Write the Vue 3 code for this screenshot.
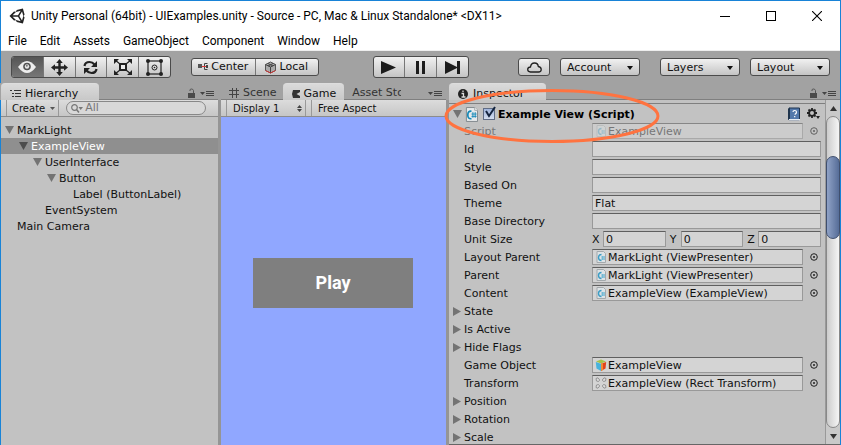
<script setup>
import { ref } from 'vue'

const menus = ['File', 'Edit', 'Assets', 'GameObject', 'Component', 'Window', 'Help']
const dropdowns = ['Account', 'Layers', 'Layout']
const tool = ref('view')
const tools = ['view', 'move', 'rotate', 'scale', 'rect']
const enabled = ref(true)

const tree = [
  { name: 'MarkLight', depth: 0, open: true },
  { name: 'ExampleView', depth: 1, open: true, selected: true },
  { name: 'UserInterface', depth: 2, open: true },
  { name: 'Button', depth: 3, open: true },
  { name: 'Label (ButtonLabel)', depth: 4 },
  { name: 'EventSystem', depth: 2 },
  { name: 'Main Camera', depth: 0 }
]

const rows = ref([
  { label: 'Script', kind: 'object', icon: 'cs', value: 'ExampleView', disabled: true },
  { label: 'Id', kind: 'text', value: '' },
  { label: 'Style', kind: 'text', value: '' },
  { label: 'Based On', kind: 'text', value: '' },
  { label: 'Theme', kind: 'text', value: 'Flat' },
  { label: 'Base Directory', kind: 'text', value: '' },
  { label: 'Unit Size', kind: 'vector', value: { X: '0', Y: '0', Z: '0' } },
  { label: 'Layout Parent', kind: 'object', icon: 'cs', value: 'MarkLight (ViewPresenter)' },
  { label: 'Parent', kind: 'object', icon: 'cs', value: 'MarkLight (ViewPresenter)' },
  { label: 'Content', kind: 'object', icon: 'cs', value: 'ExampleView (ExampleView)' },
  { label: 'State', kind: 'fold' },
  { label: 'Is Active', kind: 'fold' },
  { label: 'Hide Flags', kind: 'fold' },
  { label: 'Game Object', kind: 'object', icon: 'cube', value: 'ExampleView' },
  { label: 'Transform', kind: 'object', icon: 'rect', value: 'ExampleView (Rect Transform)' },
  { label: 'Position', kind: 'fold' },
  { label: 'Rotation', kind: 'fold' },
  { label: 'Scale', kind: 'fold' }
])
const fieldId = (row) => 'field-' + row.label.toLowerCase().replace(/ /g, '-')
</script>

<template>
  <div class="window">
    <svg class="defs" width="0" height="0" aria-hidden="true">
      <symbol id="lock" viewBox="0 0 8 10">
        <rect x="0" y="5" width="7" height="5" fill="#4a4a4a" />
        <path d="M2 3V2Q2 1 3.500 1T5.500 2.500V5" fill="none" stroke="#555" stroke-width="1" />
      </symbol>
      <symbol id="panel-menu" viewBox="0 0 14 7">
        <path d="M0 2h5L2.500 5z" fill="#444" />
        <path d="M6 1.500h8M6 3.500h8M6 5.500h8" stroke="#444" stroke-width="1" />
      </symbol>
      <symbol id="script-file" viewBox="0 0 14 16">
        <path d="M1.500.5h9l3 3v12h-12z" fill="#e6eaec" stroke="#7d8589" />
        <path d="M10.500.5v3h3" fill="#fff" stroke="#9aa0a3" />
        <path d="M7 4.500Q3 4 3 8.500T7 12.500" fill="none" stroke="#1388b8" stroke-width="1.800" />
        <path d="M8.500 5.500v6M11 5.500v6M7 7.500h5.500M7 10h5.500" stroke="#1388b8" stroke-width="1" />
      </symbol>
      <symbol id="script-small" viewBox="0 0 12 12">
        <path d="M2 .5h6.500l2 2v9H2z" fill="#dde3e6" stroke="#a3a9ac" />
        <path d="M6.500 3.500Q3.500 3.500 3.500 6.500T6.500 9.500" fill="none" stroke="#3a9cc4" stroke-width="1.400" />
        <path d="M6 6h4M6 8h4M7.500 5v4M9 5v4" stroke="#62b2d2" stroke-width=".8" />
      </symbol>
      <symbol id="game-cube" viewBox="0 0 12 12">
        <path d="M1 2.500L6 .5l5 2L6 4.500z" fill="#a5c348" />
        <path d="M.8 3L6 4.800V12L1.500 9.500z" fill="#48b3dc" />
        <path d="M11.200 3L6 4.800V12l4.500-2.500z" fill="#e1431b" />
        <path d="M8 4.100v6.800L6 12V4.800z" fill="#f28a32" />
      </symbol>
      <symbol id="rect-transform" viewBox="0 0 12 12">
        <g fill="#ddd" stroke="#8b8b8b" stroke-width=".9">
          <path d="M1 1.500l2-.7L4.700 3 3.500 4.500 1.500 4z" /><path d="M11 1.500l-2-.7L7.300 3l1.200 1.500 2-.5z" />
          <path d="M1 10.500l2 .7L4.700 9 3.500 7.500 1.500 8z" /><path d="M11 10.500l-2 .7L7.300 9l1.200-1.500 2 .5z" />
        </g>
      </symbol>
    </svg>

    <header class="titlebar">
      <svg class="logo" viewBox="0 0 512 512" aria-hidden="true">
        <path fill="#222" d="M498.110 206.400L445.310 14.720 248.200 66.080 219 116.140l-59.200-.43L15.540 256 159.820 396.280l59.170-.43 29.240 50 197.080 51.360 52.800-191.620-30-49.630zM223.770 124.200L374.550 86.510 288 232.330H114.870zm0 263.630L114.870 279.710H288l86.550 145.810zm193 14L330.170 256l86.580-145.840L458.560 256z" />
      </svg>
      <h1>Unity Personal (64bit) - UIExamples.unity - Source - PC, Mac &amp; Linux Standalone* &lt;DX11&gt;</h1>
      <div class="window-buttons">
        <button aria-label="Minimize"><svg width="10" height="10"><path d="M0 5.500h10" stroke="#000" /></svg></button>
        <button aria-label="Maximize"><svg width="10" height="10"><rect x=".5" y=".5" width="9" height="9" fill="none" stroke="#000" /></svg></button>
        <button aria-label="Close"><svg width="10" height="10"><path d="M0 0l10 10M10 0L0 10" stroke="#000" stroke-width="1.100" /></svg></button>
      </div>
    </header>

    <nav class="menubar">
      <button v-for="m in menus" :key="m">{{ m }}</button>
    </nav>

    <div class="toolbar">
      <div class="side">
        <div class="group tall tools">
          <button v-for="t in tools" :key="t" :class="{ on: tool === t }" :aria-label="t" @click="tool = t">
            <svg v-if="t === 'view'" width="18" height="12" viewBox="0 0 18 12">
              <path d="M0 6Q9-6 18 6 9 18 0 6z" fill="#eee" /><circle cx="9" cy="5.500" r="3.800" fill="#555" /><circle cx="9" cy="5.500" r="2.200" fill="#e8e8e8" /><circle cx="8.800" cy="4.800" r="1" fill="#777" />
            </svg>
            <svg v-else-if="t === 'move'" width="17" height="17" viewBox="0 0 17 17">
              <path d="M8.500 0l3.300 4H9.700v3.300H13V5.200l4 3.300-4 3.300V9.700H9.700V13h2.100l-3.300 4-3.300-4h2.100V9.700H4v2.100L0 8.500l4-3.300v2.100h3.300V4H5.200z" fill="#222" />
            </svg>
            <svg v-else-if="t === 'rotate'" width="15" height="15" viewBox="0 0 15 15">
              <path d="M1.500 6Q2 2 6.500 2 9.500 2 11.500 4.500M13.500 9Q13 13 8.500 13 5.500 13 3.500 10.500" fill="none" stroke="#222" stroke-width="2.200" />
              <path d="M14 1v6H8zM1 14V8h6z" fill="#222" />
            </svg>
            <svg v-else-if="t === 'scale'" width="18" height="16" viewBox="0 0 18 16">
              <rect x="6" y="5" width="6" height="6" fill="#eee" stroke="#222" stroke-width="2" />
              <path d="M1 1l5 4M17 1l-5 4M1 15l5-4M17 15l-5-4" stroke="#222" stroke-width="1.200" />
              <path d="M0 0h5L0 5zM18 0h-5l5 5zM0 16h5l-5-5zM18 16h-5l5-5z" fill="#222" />
            </svg>
            <svg v-else width="17" height="17" viewBox="0 0 17 17">
              <rect x="2" y="2" width="13" height="13" fill="none" stroke="#222" stroke-width="1.200" />
              <circle cx="8.500" cy="8.500" r="2.500" fill="none" stroke="#222" /><circle cx="8.500" cy="8.500" r=".8" fill="#222" />
              <g fill="#222"><circle cx="2" cy="2" r="2" /><circle cx="15" cy="2" r="2" /><circle cx="2" cy="15" r="2" /><circle cx="15" cy="15" r="2" /></g>
            </svg>
          </button>
        </div>
        <div class="group pivots">
          <button>
            <svg width="10" height="8" viewBox="0 0 10 8"><path d="M0 1h4v4H0z" fill="#555" /><path d="M9.500.5H6.500v6h3" fill="none" stroke="#444" /><path d="M4 3.500h4" stroke="#d33" /><path d="M8 2h2v3H8z" fill="#444" /></svg>
            Center
          </button>
          <button>
            <svg width="11" height="13" viewBox="0 0 11 13"><path d="M5.500 1l5 2.500v6l-5 2.500-5-2.500v-6z" fill="#aaa" stroke="#555" /><path d="M.5 3.500l5 2.500 5-2.500M5.500 6v6M3 2.500l5 2.500M8 2.500L3 5" fill="none" stroke="#444" /><path d="M.5 9.500l5 2.500 5-2.500" fill="none" stroke="#c33" /></svg>
            Local
          </button>
        </div>
      </div>
      <div class="group tall play">
        <button aria-label="Play"><svg width="15" height="13"><path d="M0 0l15 6.500L0 13z" fill="#1c1c1c" /></svg></button>
        <button aria-label="Pause"><svg width="9" height="13"><path d="M0 0h3v13H0zM6 0h3v13H6z" fill="#1c1c1c" /></svg></button>
        <button aria-label="Step"><svg width="15" height="13"><path d="M0 0l12 6V0h3v13h-3V7L0 13z" fill="#1c1c1c" /></svg></button>
      </div>
      <div class="side right">
        <div class="group">
          <button aria-label="Cloud services"><svg width="15" height="11" viewBox="0 0 15 11"><path d="M3.500 10Q.7 9.800.7 7.500T3.500 5Q4 1 7.500 1T11.300 4.500Q14.200 5 14.200 7.500T11.500 10z" fill="none" stroke="#222" stroke-width="1.300" /></svg></button>
        </div>
        <label v-for="d in dropdowns" :key="d" class="dropdown">
          <select :aria-label="d"><option>{{ d }}</option></select>
          <svg width="6" height="4"><path d="M0 0h6L3 4z" fill="#111" /></svg>
        </label>
      </div>
    </div>

    <main class="panels">
      <section class="panel">
        <div class="tabs">
          <button class="tab active first">
            <svg width="11" height="8" viewBox="0 0 11 8"><path d="M0 .5h2M2 3.500h2M2 6.500h2M4 .5h7M5 3.500h6M5 6.500h6" stroke="#333" /></svg>
            Hierarchy
          </button>
          <span class="tab-actions"><svg width="8" height="10"><use href="#lock" /></svg><svg width="14" height="7"><use href="#panel-menu" /></svg></span>
        </div>
        <div class="subbar">
          <button class="create">Create <svg width="5" height="4"><path d="M0 0h5L2.500 3z" fill="#555" /></svg></button>
          <label class="search">
            <svg width="12" height="9" viewBox="0 0 12 9"><circle cx="3.500" cy="3.500" r="2.800" fill="none" stroke="#777" stroke-width="1.200" /><path d="M5.500 5.500L8 8.500" stroke="#777" stroke-width="1.500" /><path d="M7.500 3H12L9.700 6z" fill="#777" /></svg>
            <input type="search" placeholder="All" aria-label="Search hierarchy" />
          </label>
        </div>
        <ul class="tree">
          <li v-for="n in tree" :key="n.name" :class="['depth-' + n.depth, { selected: n.selected }]">
            <svg width="9" height="8"><path v-if="n.open" d="M0 0h9L4.500 8z" :fill="n.selected ? '#4c4c4c' : '#737373'" /></svg>
            <span>{{ n.name }}</span>
          </li>
        </ul>
      </section>

      <section class="panel">
        <div class="tabs">
          <button class="tab scene"><svg width="10" height="10"><path d="M3.500 0v10M7.500 0v10M0 2.500h10M0 6.500h10" stroke="#444" /></svg>Scene</button>
          <button class="tab active view"><svg width="8" height="8"><path d="M1 0h7v2L4.500 4 8 6v2H1L0 4z" fill="#333" /></svg>Game</button>
          <button class="tab clipped">Asset Store</button>
          <span class="tab-actions"><svg width="14" height="7"><use href="#panel-menu" /></svg></span>
        </div>
        <div class="subbar game-bar">
          <label class="display">
            <select aria-label="Display"><option>Display 1</option></select>
            <svg width="5" height="7"><path d="M0 3l2.500-3L5 3zM0 4h5L2.500 7z" fill="#444" /></svg>
          </label>
          <label class="aspect"><select aria-label="Aspect"><option>Free Aspect</option></select></label>
        </div>
        <div class="game"><button>Play</button></div>
      </section>

      <section class="panel inspector">
        <div class="tabs">
          <button class="tab active info"><svg width="10" height="10"><circle cx="5" cy="5" r="5" fill="#222" /><path d="M5 1.500v1.500M3.500 4.500H5.500V8M3.500 8h4" fill="none" stroke="#ddd" stroke-width="1.300" /></svg>Inspector</button>
          <span class="tab-actions"><svg width="8" height="10"><use href="#lock" /></svg><svg width="14" height="7"><use href="#panel-menu" /></svg></span>
        </div>
        <svg class="callout" viewBox="0 0 216 56" aria-hidden="true"><ellipse cx="108" cy="28" rx="106" ry="25.500" fill="none" stroke="#ff7340" stroke-width="3" /></svg>
        <div class="inspector-body">
          <div class="properties">
            <div class="component">
              <svg width="9" height="8"><path d="M0 0h9L4.500 8z" fill="#737373" /></svg>
              <svg width="13" height="15"><use href="#script-file" /></svg>
              <label class="check">
                <input v-model="enabled" type="checkbox" />
                <svg v-if="enabled" width="13" height="13"><path d="M3 5l3 5L12 1" fill="none" stroke="#14243f" stroke-width="2" /></svg>
                <strong>Example View (Script)</strong>
              </label>
              <button aria-label="Help" class="plain end"><svg width="13" height="14" viewBox="0 0 13 14"><path d="M1 1h10.500v12H1z" fill="#5479ab" stroke="#1f3550" /><path d="M0 2l2-1.500v11L0 13z" fill="#20354d" /><path d="M1 12h11v1.500H1z" fill="#e8edf3" /><path d="M5 5Q5 3.500 6.700 3.500T8.500 5 6.700 7.500M6.700 9v1.300" stroke="#fff" fill="none" stroke-width="1.200" /></svg></button>
              <button aria-label="Component settings" class="plain"><svg width="13" height="12" viewBox="0 0 13 12"><circle cx="5" cy="5" r="2.900" fill="none" stroke="#222" stroke-width="1.800" /><path d="M5 0v2M5 8v2M0 5h2M8 5h2M1.500 1.500l1.300 1.300M7.200 7.200l1.300 1.300M8.500 1.500L7.200 2.800M2.800 7.200L1.500 8.500" stroke="#222" stroke-width="1.800" /><path d="M9 8h4l-2 3z" fill="#222" /></svg></button>
            </div>
            <div v-for="row in rows" :key="row.label" class="row" :class="{ disabled: row.disabled }">
              <button v-if="row.kind === 'fold'" class="plain fold"><svg width="8" height="9"><path d="M0 0l8 4.500L0 9z" fill="#737373" /></svg><span>{{ row.label }}</span></button>
              <label v-else class="name" :for="row.kind === 'vector' ? 'axis-X' : fieldId(row)">{{ row.label }}</label>
              <input v-if="row.kind === 'text'" :id="fieldId(row)" v-model="row.value" class="box" type="text" />
              <div v-else-if="row.kind === 'vector'" class="vector">
                <template v-for="(v, axis) in row.value" :key="axis">
                  <label :for="'axis-' + axis">{{ axis }}</label>
                  <input :id="'axis-' + axis" v-model="row.value[axis]" class="box" type="text" />
                </template>
              </div>
              <template v-else-if="row.kind === 'object'">
                <button :id="fieldId(row)" class="box object" :disabled="row.disabled">
                  <svg width="12" height="12">
                    <use :href="row.icon === 'cs' ? '#script-small' : row.icon === 'cube' ? '#game-cube' : '#rect-transform'" />
                  </svg><span>{{ row.value }}</span>
                </button>
                <button class="plain picker" :aria-label="'Pick ' + row.label" :disabled="row.disabled"><svg width="8" height="8"><circle cx="4" cy="4" r="3.300" fill="none" stroke="#222" /><circle cx="4" cy="4" r="1" fill="#222" /></svg></button>
              </template>
            </div>
          </div>
          <div class="scrollbar">
            <button class="plain" aria-label="Scroll up"><svg width="7" height="5"><path d="M0 5h7L3.500 0z" fill="#333" /></svg></button>
            <div class="track"><div class="thumb"></div></div>
            <button class="plain" aria-label="Scroll down"><svg width="7" height="5"><path d="M0 0h7L3.500 5z" fill="#333" /></svg></button>
          </div>
        </div>
      </section>
    </main>
  </div>
</template>

<style>
body { overflow: hidden; }
</style>

<style scoped>
* { box-sizing: border-box; }
.window {
  display: flex;
  flex-direction: column;
  height: 100vh;
  border: 1px solid #1883d7;
  border-bottom: 0;
  background: #a2a2a2;
  color: #111;
  font: 11px/16px "DejaVu Sans", Verdana, sans-serif;
}
.defs { position: absolute; }
svg { flex: none; display: block; }
button, input, select { font: inherit; color: inherit; margin: 0; padding: 0; border: 0; border-radius: 0; background: none; outline: none; appearance: none; }
button { display: flex; align-items: center; white-space: nowrap; }

.titlebar { display: flex; align-items: center; height: 29px; padding-left: 8px; background: #fff; flex: none; }
.logo { width: 16px; height: 16px; }
h1 { flex: 1; margin: 0 0 0 6px; font: 12px/16px Roboto, "Open Sans", sans-serif; color: #000; white-space: nowrap; }
.window-buttons { display: flex; }
.window-buttons button { width: 46px; height: 28px; justify-content: center; }
.menubar { display: flex; gap: 13px; height: 21px; padding: 2px 0 0 7px; background: #fff; border-bottom: 1px solid #eee; flex: none; font: 12px/18px Roboto, "Open Sans", sans-serif; color: #000; }
.menubar button { height: 18px; }

.toolbar { display: grid; grid-template-columns: 1fr auto 1fr; align-items: center; height: 32px; padding: 0 10px; flex: none; }
.side { display: flex; align-items: center; gap: 20px; }
.right { justify-content: flex-end; gap: 10px; }
.right .dropdown:nth-child(3) { margin-left: 10px; }
.group { display: flex; width: 32px; height: 18px; border: 1px solid #4b4b4b; border-radius: 3px; background: linear-gradient(#f1f1f1, #c4c4c4); overflow: hidden; }
.tall { height: 22px; }
.tools { width: 160px; }
.pivots { width: 128px; line-height: 18px; }
.play { width: 96px; }
.group button { flex: 1; justify-content: center; gap: 3px; }
.pivots button { flex: 1 1 0; }
.group button + button { border-left: 1px solid #777; }
.tools button.on { background: linear-gradient(#555, #777); }
.dropdown { position: relative; display: flex; width: 80px; height: 18px; border: 1px solid #4b4b4b; border-radius: 3px; background: linear-gradient(#f1f1f1, #c4c4c4); }
.dropdown select { width: 100%; padding: 1px 0 0 6px; }
.dropdown svg { position: absolute; right: 6px; top: 7px; pointer-events: none; }

.panels { flex: 1; min-height: 0; display: grid; grid-template-columns: 217fr 225fr 391fr; gap: 3px; background: #959595; }
.panel { position: relative; display: flex; flex-direction: column; min-width: 0; min-height: 0; background: #c2c2c2; }
.tabs { display: flex; height: 17px; flex: none; background: #a2a2a2; border-bottom: 1px solid #7f7f7f; box-shadow: -3px 0 #a2a2a2; }
.tab { height: 17px; gap: 4px; padding: 3px 6px 0 9px; border-radius: 4px 4px 0 0; color: #333; }
.tab.active { background: linear-gradient(#dadada, #c8c8c8); color: #111; border-top: 1px solid #ddd; }
.tab.first { padding-right: 21px; }
.tab.scene { padding-left: 8px; }
.tab.view { padding-right: 8px; }
.tab.info { padding-right: 22px; gap: 5px; }
.tab.clipped { flex: 0 1 57px; overflow: hidden; padding: 3px 0 0 8px; min-width: 0; }
.tab-actions { display: flex; align-items: center; gap: 4px; margin-left: auto; padding: 4px 4px 0 0; }
.subbar { display: flex; height: 17px; flex: none; padding-left: 5px; background: linear-gradient(#dcdcdc, #c6c6c6); border-bottom: 1px solid #8c8c8c; font-size: 10px; }
.create { gap: 5px; padding: 1px 3px 0 5px; border: solid #999; border-width: 0 1px; }
.search { display: flex; align-items: center; gap: 4px; flex: 1; height: 14px; margin: 1px 12px 0 7px; padding-left: 4px; border: 1px solid #888; border-radius: 8px; background: #d8d8d8; font-size: 11px; }
.search svg { margin-right: -2px; }
.search input { width: 100%; min-width: 0; height: 12px; }
.search input::placeholder { color: #777; opacity: 1; }
.display, .aspect { display: flex; align-items: center; border-left: 1px solid #999; padding: 1px 0 0 6px; }
.display { width: 80px; padding-right: 3px; border-right: 1px solid #999; }
.display select { flex: 1; min-width: 0; }
.aspect { flex: 1; margin-left: 5px; }
.aspect select { width: 100%; }

.tree { list-style: none; margin: 0; padding: 5px 0; }
.tree li { display: flex; align-items: center; gap: 3px; height: 16px; padding-left: 4px; line-height: 14px; }
.tree span { padding-top: 2px; }
.tree li.depth-1 { padding-left: 18px; }
.tree li.depth-2 { padding-left: 32px; }
.tree li.depth-3 { padding-left: 46px; }
.tree li.depth-4 { padding-left: 60px; }
.tree li.selected { background: #8f8f8f; color: #fff; }

.game { flex: 1; display: flex; align-items: center; justify-content: center; padding: 4px 1px 0 0; background: #90a7ff; }
.game button { width: 160px; height: 50px; justify-content: center; background: #7f7f7f; color: #fff; font: bold 18px/24px Roboto, sans-serif; }

.callout { position: absolute; z-index: 2; left: -5px; top: 5px; width: 216px; height: 56px; pointer-events: none; }
.inspector-body { flex: 1; min-height: 0; display: flex; border-bottom: 1px solid #666; }
.properties { flex: 1; min-width: 0; margin-top: 3px; border-top: 1px solid #7f7f7f; overflow: hidden; }
.component { display: flex; align-items: center; gap: 3px; height: 18px; padding: 2px 5px 0 4px; }
.check { position: relative; display: flex; align-items: center; gap: 3px; margin-left: 2px; }
.check input { width: 12px; height: 12px; border: 1px solid #5f6c85; background: linear-gradient(#9fb4dc, #d4ddee); }
.check svg { position: absolute; left: 0; top: 1px; }
.check strong { white-space: nowrap; color: #000; padding-top: 2px; }
.end { margin-left: auto; margin-right: 3px; }
.row { display: flex; align-items: center; height: 18px; padding: 0 4px 0 15px; }
.name { width: 128px; flex: none; padding-top: 2px; }
.fold { gap: 3px; margin-left: -11px; }
.fold span { padding-top: 2px; }
.box { flex: 1; min-width: 0; width: 0; height: 16px; padding: 0 2px; border: 1px solid #999; border-top-color: #5f5f5f; background: #d4d4d4; line-height: 14px; }
.object { gap: 1px; margin-right: 7px; }
.object span { padding-top: 1px; }
.picker { width: 8px; margin-right: 3px; }
.disabled { color: #777; }
.disabled svg, .disabled .box { opacity: .6; }
.disabled .box { color: #444; }
.vector { display: flex; flex: 1; align-items: center; min-width: 0; }
.vector label { width: 11px; padding-top: 2px; }
.vector .box + label { margin-left: 4px; }
.scrollbar { display: flex; flex-direction: column; width: 15px; background: #c9c9c9; border-left: 1px solid #999; }
.scrollbar button { height: 16px; justify-content: center; }
.track { flex: 1; display: flex; flex-direction: column; border: 1px solid #888; border-radius: 7px; background: linear-gradient(90deg, #ccc, #f5f5f5); }
.track::before { content: ""; flex: 39; }
.track::after { content: ""; flex: 190; }
.thumb { flex: 82; margin: 0 -1px; border: 1px solid #3f4f6e; border-radius: 7px; background: linear-gradient(90deg, #8fa2c6, #566d98); }
</style>
